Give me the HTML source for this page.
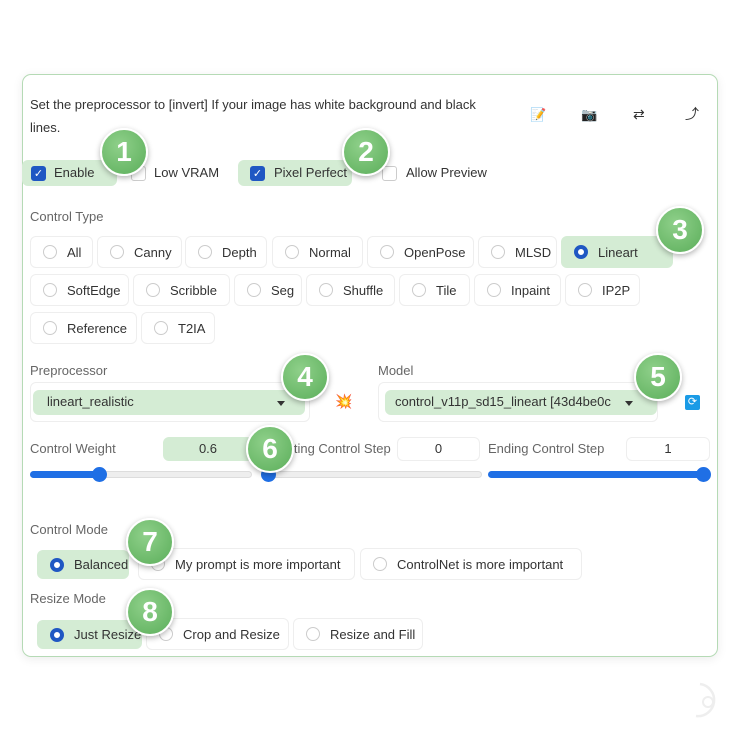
<!DOCTYPE html><html><head><style>
body{margin:0;width:740px;height:740px;background:#fff;font-family:"Liberation Sans",sans-serif;font-size:13px;color:#333;position:relative;overflow:hidden}
.a{position:absolute}
.panel{left:22px;top:74px;width:694px;height:581px;border:1.5px solid #b5dab5;border-radius:9px;box-shadow:0 2px 10px rgba(0,0,0,.08)}
.lbl{color:#666;font-size:13px}
.btn{position:absolute;height:32px;border:1px solid #eee;border-radius:6px;background:#fff;box-sizing:border-box;display:flex;align-items:center;padding-left:12px;white-space:nowrap}
.btn.sel{background:#d4ecd4;border-color:#d4ecd4}
.r{flex-shrink:0;width:14px;height:14px;border:1px solid #ccc;border-radius:50%;margin-right:10px;box-sizing:border-box;background:#fff}
.sel .r{border:4px solid #1f57c3;background:#fff}
.cb{position:absolute;width:15px;height:15px;border-radius:3px;box-sizing:border-box;border:1px solid #ccc;background:#fff}
.cb.on{background:#1f57c3;border-color:#1f57c3;color:#fff;font-size:11px;line-height:14px;text-align:center}
.badge{position:absolute;width:44px;height:44px;border-radius:50%;background:radial-gradient(circle at 40% 35%,#8fd08a,#5bae5a);border:2px solid #fff;box-shadow:0 2px 6px rgba(0,0,0,.3);color:#fff;font-weight:bold;font-size:28px;line-height:44px;text-align:center;box-sizing:content-box;margin:-24px 0 0 -24px}
.num{position:absolute;height:24px;border:1px solid #eee;border-radius:6px;box-sizing:border-box;text-align:center;line-height:22px;background:#fff}
.track{position:absolute;height:7px;border-radius:4px;background:#eee;border:1px solid #ddd;box-sizing:border-box}
.fill{position:absolute;height:7px;border-radius:4px;background:#1f6fe5}
.thumb{position:absolute;width:15px;height:15px;border-radius:50%;background:#1f6fe5;margin:-4px 0 0 -7px}
.arr{position:absolute;width:0;height:0;border-left:4px solid transparent;border-right:4px solid transparent;border-top:5px solid #333}
</style></head><body>
<div class="a panel"></div>
<div class="a" style="left:30px;top:93px;line-height:23px;width:470px">Set the preprocessor to [invert] If your image has white background and black lines.</div>
<div class="a" style="left:530px;top:107px;font-size:13px">📝</div>
<div class="a" style="left:581px;top:107px;font-size:13px">📷</div>
<div class="a" style="left:633px;top:106px;font-size:14px">⇄</div>
<div class="a" style="left:685px;top:104px;font-size:14px">⤴</div>

<div class="a" style="left:22px;top:160px;width:95px;height:26px;background:#d4ecd4;border-radius:6px"></div>
<div class="cb on" style="left:31px;top:166px">✓</div><div class="a" style="left:54px;top:165px">Enable</div>
<div class="cb" style="left:131px;top:166px"></div><div class="a" style="left:154px;top:165px">Low VRAM</div>
<div class="a" style="left:238px;top:160px;width:114px;height:26px;background:#d4ecd4;border-radius:6px"></div>
<div class="cb on" style="left:250px;top:166px">✓</div><div class="a" style="left:274px;top:165px">Pixel Perfect</div>
<div class="cb" style="left:382px;top:166px"></div><div class="a" style="left:406px;top:165px">Allow Preview</div>

<div class="a lbl" style="left:30px;top:209px">Control Type</div>
<div class="btn" style="left:30px;top:236px;width:63px"><span class="r"></span>All</div>
<div class="btn" style="left:97px;top:236px;width:85px"><span class="r"></span>Canny</div>
<div class="btn" style="left:185px;top:236px;width:82px"><span class="r"></span>Depth</div>
<div class="btn" style="left:272px;top:236px;width:91px"><span class="r"></span>Normal</div>
<div class="btn" style="left:367px;top:236px;width:107px"><span class="r"></span>OpenPose</div>
<div class="btn" style="left:478px;top:236px;width:79px"><span class="r"></span>MLSD</div>
<div class="btn sel" style="left:561px;top:236px;width:112px"><span class="r"></span>Lineart</div>
<div class="btn" style="left:30px;top:274px;width:99px"><span class="r"></span>SoftEdge</div>
<div class="btn" style="left:133px;top:274px;width:97px"><span class="r"></span>Scribble</div>
<div class="btn" style="left:234px;top:274px;width:68px"><span class="r"></span>Seg</div>
<div class="btn" style="left:306px;top:274px;width:89px"><span class="r"></span>Shuffle</div>
<div class="btn" style="left:399px;top:274px;width:71px"><span class="r"></span>Tile</div>
<div class="btn" style="left:474px;top:274px;width:87px"><span class="r"></span>Inpaint</div>
<div class="btn" style="left:565px;top:274px;width:75px"><span class="r"></span>IP2P</div>
<div class="btn" style="left:30px;top:312px;width:107px"><span class="r"></span>Reference</div>
<div class="btn" style="left:141px;top:312px;width:74px"><span class="r"></span>T2IA</div>

<div class="a lbl" style="left:30px;top:363px">Preprocessor</div>
<div class="a" style="left:30px;top:382px;width:280px;height:40px;border:1px solid #eee;border-radius:6px;box-sizing:border-box"></div>
<div class="a" style="left:33px;top:390px;width:272px;height:25px;background:#d4ecd4;border-radius:6px"></div>
<div class="a" style="left:47px;top:394px">lineart_realistic</div>
<div class="arr" style="left:277px;top:401px"></div>
<div class="a" style="left:335px;top:393px;font-size:14px">💥</div>
<div class="a lbl" style="left:378px;top:363px">Model</div>
<div class="a" style="left:378px;top:382px;width:280px;height:40px;border:1px solid #eee;border-radius:6px;box-sizing:border-box"></div>
<div class="a" style="left:385px;top:390px;width:272px;height:25px;background:#d4ecd4;border-radius:6px"></div>
<div class="a" style="left:395px;top:394px">control_v11p_sd15_lineart [43d4be0c</div>
<div class="arr" style="left:625px;top:401px"></div>
<div class="a" style="left:685px;top:395px;width:15px;height:15px;background:#1a9be6;border-radius:2px;color:#fff;font-size:11px;line-height:15px;text-align:center">⟳</div>

<div class="a lbl" style="left:30px;top:441px">Control Weight</div>
<div class="num" style="left:163px;top:437px;width:90px;background:#d4ecd4;border-color:#d4ecd4">0.6</div>
<div class="a lbl" style="left:270px;top:441px">Starting Control Step</div>
<div class="num" style="left:397px;top:437px;width:83px">0</div>
<div class="a lbl" style="left:488px;top:441px">Ending Control Step</div>
<div class="num" style="left:626px;top:437px;width:84px">1</div>
<div class="track" style="left:30px;top:471px;width:222px"></div><div class="fill" style="left:30px;top:471px;width:69px"></div><div class="thumb" style="left:99px;top:471px"></div>
<div class="track" style="left:262px;top:471px;width:220px"></div><div class="thumb" style="left:268px;top:471px"></div>
<div class="fill" style="left:488px;top:471px;width:222px"></div><div class="thumb" style="left:703px;top:471px"></div>

<div class="a lbl" style="left:30px;top:522px">Control Mode</div>
<div class="btn" style="left:30px;top:548px;width:104px;border:none"></div>
<div class="btn sel" style="left:37px;top:550px;width:92px;height:29px"><span class="r"></span>Balanced</div>
<div class="btn" style="left:138px;top:548px;width:217px"><span class="r"></span>My prompt is more important</div>
<div class="btn" style="left:360px;top:548px;width:222px"><span class="r"></span>ControlNet is more important</div>
<div class="a lbl" style="left:30px;top:591px">Resize Mode</div>
<div class="btn sel" style="left:37px;top:620px;width:105px;height:29px"><span class="r"></span>Just Resize</div>
<div class="btn" style="left:146px;top:618px;width:143px"><span class="r"></span>Crop and Resize</div>
<div class="btn" style="left:293px;top:618px;width:130px"><span class="r"></span>Resize and Fill</div>

<div class="badge" style="left:124px;top:152px">1</div>
<div class="badge" style="left:366px;top:152px">2</div>
<div class="badge" style="left:680px;top:230px">3</div>
<div class="badge" style="left:305px;top:377px">4</div>
<div class="badge" style="left:658px;top:377px">5</div>
<div class="badge" style="left:270px;top:449px">6</div>
<div class="badge" style="left:150px;top:542px">7</div>
<div class="badge" style="left:150px;top:612px">8</div>
<svg class="a" style="left:688px;top:680px" width="40" height="42"><path d="M12 4 A16 16 0 1 1 8 36" fill="none" stroke="#eee" stroke-width="2.5"/><circle cx="20" cy="22" r="5" fill="none" stroke="#eee" stroke-width="2"/></svg>
</body></html>
